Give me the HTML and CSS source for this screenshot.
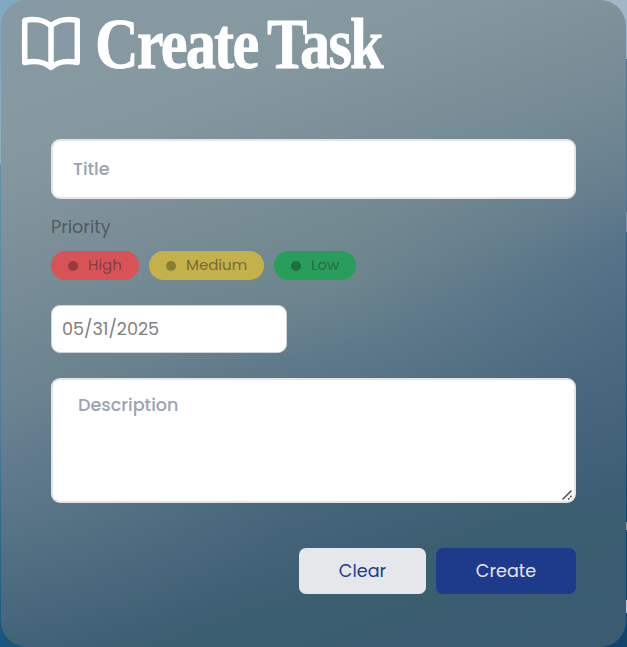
FILE: index.html
```html
<!DOCTYPE html>
<html lang="en">
<head>
<meta charset="utf-8">
<title>Create Task</title>
<link rel="stylesheet" href="styles.css">
</head>
<body>
<main class="panel">
  <header class="heading">
    <svg class="book" viewBox="0 0 60 56" fill="none" stroke="currentColor" stroke-width="5.5" stroke-linecap="round" stroke-linejoin="round">
      <path d="M31 10C24 3 13 2.500 4.700 4.500v42c9-2 19-1.500 26.300 5 7.300-6.500 17.300-7 26.300-5v-42C49 2.500 38 3 31 10zM31 10v41"/>
    </svg>
    <h1 class="title">Create Task</h1>
  </header>
  <form class="form">
    <input class="field" type="text" placeholder="Title" aria-label="Title">
    <div class="label">Priority</div>
    <div class="chips">
      <span class="chip high"><i class="dot"></i><span>High</span></span>
      <span class="chip medium"><i class="dot"></i><span>Medium</span></span>
      <span class="chip low"><i class="dot"></i><span>Low</span></span>
    </div>
    <input class="date" type="text" value="05/31/2025" aria-label="Date">
    <div class="area">
      <textarea class="field description" placeholder="Description" aria-label="Description"></textarea>
      <svg class="grip" viewBox="0 0 12 12" stroke="#4c4c4c" stroke-width="1.5"><path d="M1.500 10.500l9-9M7 10.500l1.500-1.500M9.200 8.300l1.500-1.500"/></svg>
    </div>
    <div class="actions">
      <button class="button clear" type="button">Clear</button>
      <button class="button create" type="button">Create</button>
    </div>
  </form>
</main>
</body>
</html>
```
FILE: styles.css
```css
* { box-sizing: border-box; }
body {
  margin: 0;
  padding: 0 1px;
  height: 647px;
  overflow: hidden;
  font-family: Poppins, Inter, sans-serif;
  background:
    linear-gradient(#a1b7c7 59px, #5b7890 59px, #58748d 212px, #7893a8 212px, #7893a8 232px, #38617e 232px, #1c4c70 450px, #104468 522px, #7e9aae 522px, #7e9aae 530px, #104468 530px, #104468 600px, #b4c6d2 600px, #b4c6d2 613px, #104468 613px) right / 50% 100% no-repeat,
    linear-gradient(#80a9c1, #8fafbd 164px, #6290ab 165px, #4f7e9b 400px, #16567f);
}
.panel {
  height: 647px;
  border-radius: 26px;
  background:
    radial-gradient(ellipse 300px 170px at 0 470px, #84929a38, #84929a00),
    radial-gradient(ellipse 300px 180px at 330px 280px, #7c908e50, #7c908e00),
    radial-gradient(ellipse 330px 200px at 100% 350px, #4a678540, #4a678500),
    linear-gradient(160deg, #8799a4 0%, #86989f 18%, #7c8f99 30%, #718893 39%, #67808e 47%, #577489 54%, #4d6c80 63%, #45647a 72%, #3c5e71 81%, #3a5b70 100%);
}
.heading {
  display: flex;
  height: 139px;
  padding: 16px 0 0 19px;
  color: #fff;
}
.book { width: 60px; height: 56px; flex: none; }
.title {
  margin: -13px 0 0 15px;
  font: bold 72px/80px "Liberation Serif", serif;
  letter-spacing: -2.2px;
  word-spacing: -3px;
  -webkit-text-stroke: .8px #fff;
  white-space: nowrap;
  transform: translateY(1px) scaleX(.84);
  transform-origin: left;
}
.form { padding: 0 50px; display: flex; flex-direction: column; }
.field {
  width: 100%;
  height: 60px;
  border: 2px solid #e5e5e5;
  border-radius: 9px;
  padding: 0 20px;
  background: #fff;
  font: 500 17.6px/26px Poppins, Inter, sans-serif;
  outline: 0;
}
.field::placeholder { color: #9ca3b4; opacity: 1; }
.label { margin-top: 14px; height: 29px; font-size: 17.6px; line-height: 28px; color: #515b60; }
.chips { display: flex; gap: 10px; margin-top: 9px; }
.chip {
  display: flex;
  align-items: center;
  gap: 10px;
  height: 29px;
  padding-left: 17px;
  border-radius: 15px;
  font-size: 15px;
  line-height: 27px;
}
.chip span { height: 29px; }
.dot { width: 10px; height: 10px; border-radius: 50%; }
.high { width: 88px; background: #d75357; color: #823f43; }
.high .dot { background: #963b40; }
.medium { width: 115px; background: #c4b149; color: #756c3b; }
.medium .dot { background: #897d35; }
.low { width: 82px; background: #299e5c; color: #306849; }
.low .dot { background: #1d7041; }
.date {
  width: 236px;
  height: 48px;
  margin-top: 25px;
  border: 1px solid #d1d5db;
  border-radius: 9px;
  padding: 0 10px;
  background: #fff;
  color: #81817e;
  font: 400 17.6px Poppins, Inter, sans-serif;
  outline: 0;
}
.area { position: relative; height: 125px; margin-top: 25px; }
.description { display: block; height: 125px; padding: 12px 25px; resize: none; }
.grip { position: absolute; right: 3px; bottom: 2px; width: 12px; height: 12px; }
.actions { display: flex; justify-content: flex-end; gap: 10px; margin-top: 45px; }
.button {
  height: 46px;
  border: 0;
  border-radius: 7px;
  padding: 0 0 1px;
  font: 400 17.6px Poppins, Inter, sans-serif;
}
.clear { width: 127px; background: #e5e7eb; color: #1e3a8a; }
.create { width: 140px; background: #1e3a8a; color: #e5e7eb; }
```
